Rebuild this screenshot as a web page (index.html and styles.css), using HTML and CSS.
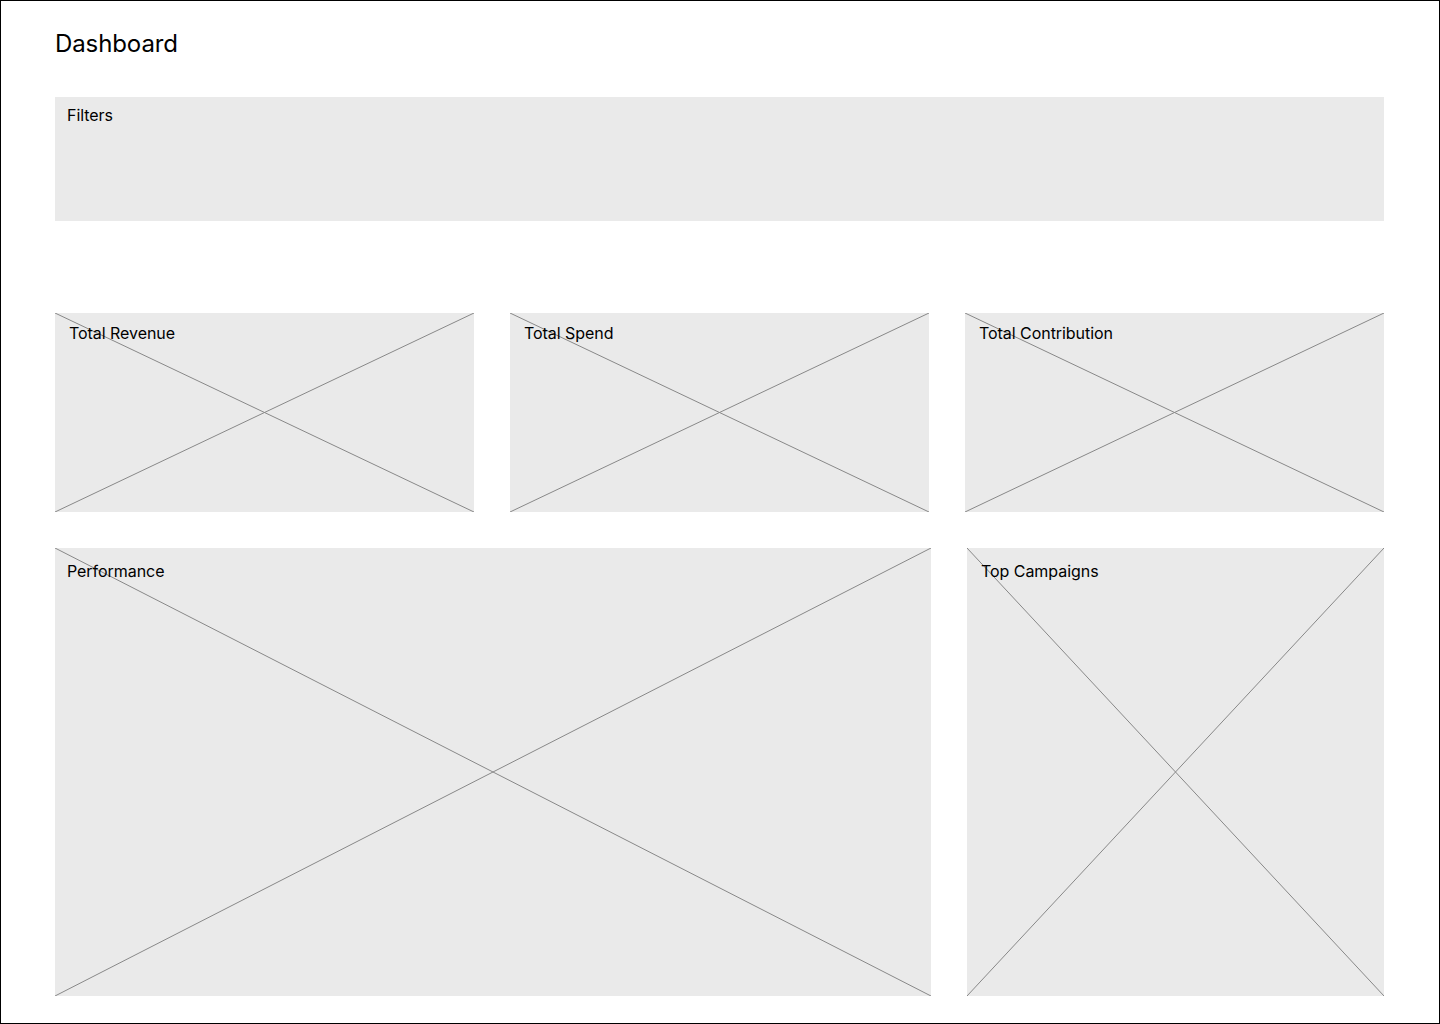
FILE: index.html
```html
<!DOCTYPE html>
<html lang="en">
<head>
<meta charset="utf-8">
<title>Dashboard</title>
<link rel="stylesheet" href="styles.css">
</head>
<body>
<div class="page">
  <h1 class="title">Dashboard</h1>
  <section class="filters"><span class="label">Filters</span></section>
  <section class="kpis">
    <div class="box kpi">
      <svg class="cross" viewBox="0 0 100 100" preserveAspectRatio="none"><line x1="0" y1="0" x2="100" y2="100"/><line x1="0" y1="100" x2="100" y2="0"/></svg>
      <span class="label">Total Revenue</span>
    </div>
    <div class="box kpi">
      <svg class="cross" viewBox="0 0 100 100" preserveAspectRatio="none"><line x1="0" y1="0" x2="100" y2="100"/><line x1="0" y1="100" x2="100" y2="0"/></svg>
      <span class="label">Total Spend</span>
    </div>
    <div class="box kpi">
      <svg class="cross" viewBox="0 0 100 100" preserveAspectRatio="none"><line x1="0" y1="0" x2="100" y2="100"/><line x1="0" y1="100" x2="100" y2="0"/></svg>
      <span class="label">Total Contribution</span>
    </div>
  </section>
  <section class="charts">
    <div class="box chart perf">
      <svg class="cross" viewBox="0 0 100 100" preserveAspectRatio="none"><line x1="0" y1="0" x2="100" y2="100"/><line x1="0" y1="100" x2="100" y2="0"/></svg>
      <span class="label">Performance</span>
    </div>
    <div class="box chart top">
      <svg class="cross" viewBox="0 0 100 100" preserveAspectRatio="none"><line x1="0" y1="0" x2="100" y2="100"/><line x1="0" y1="100" x2="100" y2="0"/></svg>
      <span class="label">Top Campaigns</span>
    </div>
  </section>
</div>
</body>
</html>
```
FILE: styles.css
```css
* { box-sizing: border-box; }
html, body { margin: 0; padding: 0; background: #fff; }
body {
  font-family: Inter, "Noto Sans", "Liberation Sans", sans-serif;
  color: #000;
}
.page {
  width: 1440px;
  height: 1024px;
  border: 1px solid #000;
  padding: 28px 55px 0 54px;
  display: flex;
  flex-direction: column;
}
.title {
  margin: 0;
  font-size: 24px;
  line-height: 29px;
  font-weight: 400;
  letter-spacing: -0.1px;
}
.label {
  position: relative;
  display: block;
  font-size: 16px;
  line-height: 19px;
  font-weight: 400;
  letter-spacing: -0.05px;
}
.filters {
  margin-top: 39px;
  height: 124px;
  background: #eaeaea;
  padding: 9px 12px;
}
.box {
  position: relative;
  background: #eaeaea;
  overflow: hidden;
}
.cross {
  position: absolute;
  inset: 0;
  width: 100%;
  height: 100%;
}
.cross line {
  stroke: #888;
  stroke-width: 1;
  vector-effect: non-scaling-stroke;
}
.kpis {
  margin-top: 92px;
  display: grid;
  grid-template-columns: repeat(3, 1fr);
  gap: 36px;
  height: 199px;
}
.kpi { padding: 11px 14px; }
.charts {
  margin-top: 36px;
  display: grid;
  grid-template-columns: 876px 417px;
  gap: 36px;
  height: 448px;
}
.chart { padding: 14px 12px; }
.chart.top { padding: 14px 14px; }
```
